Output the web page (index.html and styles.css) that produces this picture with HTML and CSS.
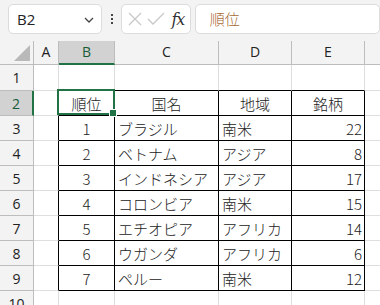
FILE: index.html
```html
<!DOCTYPE html>
<html lang="ja">
<head>
<meta charset="utf-8">
<link rel="stylesheet" href="styles.css">
</head>
<body>
<div class="app">
  <div class="toolbar">
    <div class="namebox">
      <span class="nb-text">B2</span>
      <svg class="chev" width="12" height="8" viewBox="0 0 12 8"><path d="M2 2 L6 6 L10 2" fill="none" stroke="#444" stroke-width="1.3"/></svg>
    </div>
    <div class="dots"><span></span><span></span><span></span></div>
    <div class="fxbox">
      <svg width="18" height="18" viewBox="0 0 18 18"><path d="M3 3 L15 15 M15 3 L3 15" stroke="#c8c8c8" stroke-width="1.3" fill="none"/></svg>
      <svg width="20" height="18" viewBox="0 0 20 18"><path d="M2 9 L7 14 L18 3" stroke="#c8c8c8" stroke-width="1.3" fill="none"/></svg>
      <span class="fx">fx</span>
    </div>
    <div class="formula">順位</div>
  </div>
  <div class="grid">
    <div class="corner"><span class="tri"></span></div>
    <div class="ch">A</div>
    <div class="ch sel">B</div>
    <div class="ch">C</div>
    <div class="ch">D</div>
    <div class="ch">E</div>
    <div class="ch last"></div>

    <div class="rh r1">1</div>
    <div class="c r1"></div><div class="c r1 tb"></div><div class="c r1 tb"></div><div class="c r1 tb"></div><div class="c r1 tb"></div><div class="c r1 last"></div>

    <div class="rh sel">2</div>
    <div class="c tl"></div><div class="c t ctr">順位</div><div class="c t ctr">国名</div><div class="c t ctr">地域</div><div class="c t ctr">銘柄</div><div class="c last"></div>

    <div class="rh">3</div>
    <div class="c tl"></div><div class="c t ctr">1</div><div class="c t">ブラジル</div><div class="c t">南米</div><div class="c t rt">22</div><div class="c last"></div>

    <div class="rh">4</div>
    <div class="c tl"></div><div class="c t ctr">2</div><div class="c t">ベトナム</div><div class="c t">アジア</div><div class="c t rt">8</div><div class="c last"></div>

    <div class="rh">5</div>
    <div class="c tl"></div><div class="c t ctr">3</div><div class="c t">インドネシア</div><div class="c t">アジア</div><div class="c t rt">17</div><div class="c last"></div>

    <div class="rh">6</div>
    <div class="c tl"></div><div class="c t ctr">4</div><div class="c t">コロンビア</div><div class="c t">南米</div><div class="c t rt">15</div><div class="c last"></div>

    <div class="rh">7</div>
    <div class="c tl"></div><div class="c t ctr">5</div><div class="c t">エチオピア</div><div class="c t">アフリカ</div><div class="c t rt">14</div><div class="c last"></div>

    <div class="rh">8</div>
    <div class="c tl"></div><div class="c t ctr">6</div><div class="c t">ウガンダ</div><div class="c t">アフリカ</div><div class="c t rt">6</div><div class="c last"></div>

    <div class="rh">9</div>
    <div class="c tl"></div><div class="c t ctr">7</div><div class="c t">ペルー</div><div class="c t">南米</div><div class="c t rt">12</div><div class="c last"></div>

    <div class="rh">10</div>
    <div class="c"></div><div class="c"></div><div class="c"></div><div class="c"></div><div class="c"></div><div class="c last"></div>

    <div class="selbox"><span class="handle"></span></div>
  </div>
</div>
</body>
</html>
```

FILE: styles.css
```css
html, body {
  margin: 0;
  padding: 0;
  background: #f3f3f3;
  overflow: hidden;
}
.app {
  width: 380px;
  height: 305px;
  overflow: hidden;
  font-family: "Noto Sans CJK JP", "Noto Sans", sans-serif;
}
.toolbar {
  height: 41px;
  box-sizing: border-box;
  padding: 4px 0 0 8px;
  display: flex;
  align-items: flex-start;
  background: #f3f3f3;
  white-space: nowrap;
}
.namebox {
  width: 101px;
  height: 30px;
  box-sizing: border-box;
  border: 1px solid #dcdcdc;
  border-radius: 5px;
  background: #fff;
  display: flex;
  align-items: center;
  justify-content: space-between;
  padding: 0 6px 0 8px;
  font-family: "Open Sans", "Liberation Sans", sans-serif;
  font-size: 15px;
  color: #222;
}
.chev { margin-top: 1px; }
.dots {
  width: 21px;
  height: 30px;
  display: flex;
  flex-direction: column;
  align-items: center;
  justify-content: center;
  gap: 2px;
}
.dots span {
  width: 2px;
  height: 2px;
  background: #444;
}
.fxbox {
  width: 75px;
  height: 30px;
  box-sizing: border-box;
  border: 1px solid #dcdcdc;
  border-radius: 5px;
  background: #fff;
  display: flex;
  align-items: center;
  padding-left: 4px;
  gap: 2px;
}
.fx {
  font-family: "DejaVu Serif", "Liberation Serif", serif;
  font-style: italic;
  font-weight: normal;
  font-size: 16px;
  color: #333;
  margin-left: 3px;
  letter-spacing: -1px;
}
.formula {
  margin-left: 4px;
  width: 200px;
  height: 30px;
  box-sizing: border-box;
  border: 1px solid #dcdcdc;
  border-radius: 5px;
  background: #fff;
  padding: 4px 0 0 14px;
  font-size: 15px;
  font-weight: 300;
  color: #a86a35;
  line-height: 20px;
}
.grid {
  position: relative;
  display: grid;
  grid-template-columns: 34px 25px 56px 104px 73px 73px 1fr;
  grid-template-rows: 24px 26px repeat(9, 25px);
  background: #fff;
  font-size: 15px;
  color: #222;
}
.corner {
  position: relative;
  background: #f3f3f3;
  border-right: 1px solid #bdbdbd;
  border-bottom: 1px solid #bdbdbd;
}
.tri {
  position: absolute;
  right: 3px;
  bottom: 3px;
  width: 0;
  height: 0;
  border-left: 16px solid transparent;
  border-bottom: 16px solid #b9b9b9;
}
.ch {
  background: #f3f3f3;
  border-right: 1px solid #bdbdbd;
  border-bottom: 1px solid #bdbdbd;
  font-family: "Open Sans", "Liberation Sans", sans-serif;
  font-size: 14px;
  color: #222;
  display: flex;
  align-items: center;
  justify-content: center;
  padding-bottom: 2px;
}
.ch.sel {
  background: #d2d2d2;
  color: #185c37;
  border-bottom: 2px solid #217346;
  padding-bottom: 1px;
}
.ch.last { border-right: none; }
.rh {
  background: #f3f3f3;
  border-right: 1px solid #bdbdbd;
  border-bottom: 1px solid #bdbdbd;
  font-family: "Open Sans", "Liberation Sans", sans-serif;
  font-size: 14px;
  color: #222;
  display: flex;
  align-items: center;
  justify-content: center;
}
.rh.sel {
  background: #d2d2d2;
  color: #185c37;
  border-right: 2px solid #217346;
}
.c {
  border-right: 1px solid #dedede;
  border-bottom: 1px solid #dedede;
  display: flex;
  align-items: center;
  padding: 1px 3px 0 3px;
  white-space: nowrap;
  overflow: visible;
  line-height: 1;
  font-weight: 300;
}
.c.last { border-right: none; }
.c.tl { border-right-color: #000; }
.c.tb { border-bottom-color: #000; }
.c.t {
  border-right-color: #000;
  border-bottom-color: #000;
}
.c.ctr { justify-content: center; }
.c.rt { justify-content: flex-end; padding-right: 2px; }
.selbox {
  position: absolute;
  left: 57px;
  top: 48px;
  width: 58px;
  height: 26px;
  box-sizing: border-box;
  border: 2px solid #217346;
  pointer-events: none;
}
.handle {
  position: absolute;
  right: -4px;
  bottom: -4px;
  width: 6px;
  height: 6px;
  background: #217346;
  border: 1px solid #fff;
}
```
